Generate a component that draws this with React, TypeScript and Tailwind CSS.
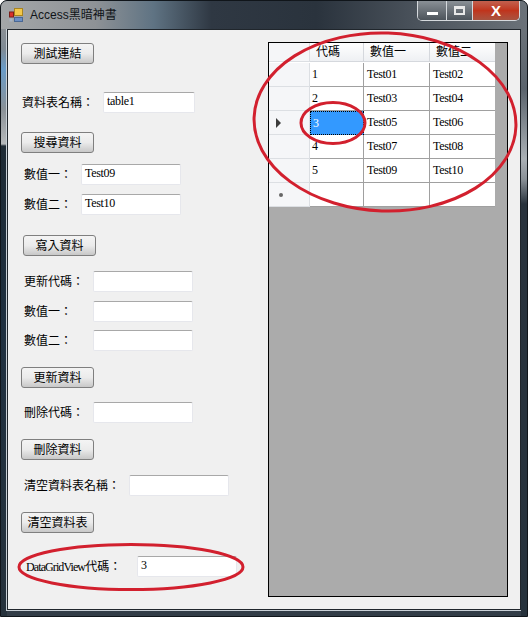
import type { ReactNode } from "react";

const fontFamily = "font-['Liberation_Serif','Noto_Sans_CJK_TC',serif]";

const Btn = ({ label, className = "" }: { label: string; className?: string }) => (
  <button
    className={`flex h-[21px] w-[73px] items-center justify-center rounded-[3px] border border-[#7f7f7f] bg-gradient-to-b from-[#f4f4f4] via-[#ebebeb] to-[#c8c8c8] text-[12px] leading-none text-black ${className}`}
  >
    {label}
  </button>
);

const Field = ({
  label,
  value = "",
  labelWidth,
  inputWidth = "w-[100px]",
  className = "",
}: {
  label: ReactNode;
  value?: string;
  labelWidth: string;
  inputWidth?: string;
  className?: string;
}) => (
  <div className={`flex h-[21px] items-center ${className}`}>
    <span className={`whitespace-nowrap text-[12px] leading-none text-black ${labelWidth}`}>{label}</span>
    <div
      className={`h-[21px] rounded-[2px] border border-[#e6e7ec] border-t-[#a8a8a8] bg-white pl-[3px] pt-[2px] text-[12px] leading-[13px] tracking-[-0.3px] text-black ${inputWidth}`}
    >
      {value}
    </div>
  </div>
);

const rows = [
  ["1", "Test01", "Test02"],
  ["2", "Test03", "Test04"],
  ["3", "Test05", "Test06"],
  ["4", "Test07", "Test08"],
  ["5", "Test09", "Test10"],
  ["", "", ""],
];

const headerCell = "h-[19px] border-b border-[#d5d8dd] bg-gradient-to-b from-white to-[#eef0f3] pl-[6px] text-[12px] leading-[18px]";

const Grid = () => (
  <div className="h-[555px] w-[240px] border border-black bg-[#ababab] text-black">
    <div className="flex h-[20px] w-[226px] bg-white">
      <div className="h-[19px] w-[41px] border-r border-b border-[#dcdfe3] bg-[#f5f6f8]" />
      <div className={`w-[54px] border-r ${headerCell}`}>代碼</div>
      <div className={`w-[66px] border-r ${headerCell}`}>數值一</div>
      <div className={`w-[65px] ${headerCell}`}>數值二</div>
    </div>
    {rows.map((row, i) => (
      <div key={i} className="flex h-[24px] w-[226px] bg-white text-[12px] leading-[23px] tracking-[-0.3px]">
        <div className="flex w-[41px] items-center border-r border-b border-[#dcdfe3] bg-[#f5f6f8] pl-[7px]">
          {i === 2 && <div className="h-0 w-0 border-y-[5px] border-l-[5px] border-y-transparent border-l-[#3c3c3c]" />}
          {i === 5 && <div className="ml-[3px] h-[4px] w-[4px] rounded-full bg-[#666666]" />}
        </div>
        <div
          className={`w-[54px] pl-[2px] ${
            i === 2
              ? "border border-dotted border-black bg-[#3399ff] text-white"
              : "border-r border-b border-[#a0a0a0]"
          }`}
        >
          {row[0]}
        </div>
        <div className="w-[66px] border-r border-b border-[#a0a0a0] pl-[3px]">{row[1]}</div>
        <div className="w-[65px] border-b border-[#a0a0a0] pl-[3px]">{row[2]}</div>
      </div>
    ))}
  </div>
);

const TitleBar = () => (
  <div className="relative flex h-[28px] items-center bg-[linear-gradient(90deg,#a4a7a9_0%,#8e9296_18%,#5f7383_29%,#2f3843_40%,#2a333d_60%,#49515a_78%,#6b7279_100%)] pl-[8px]">
    <svg width="14" height="14" viewBox="0 0 14 14" className="relative">
      <rect x="0.5" y="4" width="4" height="5" fill="#d8322a" stroke="#7a1f1a" />
      <rect x="5.5" y="0.5" width="8" height="7" fill="#f3c84a" stroke="#a88420" />
      <rect x="0.5" y="10.5" width="3" height="3" fill="#a8b4c4" />
      <rect x="5.5" y="9.5" width="8" height="4" fill="#6c8fc4" stroke="#4a6894" />
    </svg>
    <span className="relative ml-[7px] text-[12px] leading-none text-[#101418] font-['Liberation_Sans','Noto_Sans_CJK_TC',sans-serif]">
      Access黑暗神書
    </span>
    <div className="relative ml-auto mr-[7px] flex h-[20px] self-start overflow-hidden rounded-b-[5px] border border-t-0 border-[#d5d9dd]">
      <div className="flex w-[29px] items-end justify-center border-r border-[#d5d9dd] bg-gradient-to-b from-[#8a9096] to-[#4d545b] pb-[5px]">
        <div className="h-[3px] w-[11px] bg-white" />
      </div>
      <div className="flex w-[26px] items-center justify-center border-r border-[#d5d9dd] bg-gradient-to-b from-[#8a9096] to-[#4d545b]">
        <div className="h-[9px] w-[11px] border-2 border-t-[3px] border-[#e8e8e8]" />
      </div>
      <div className="flex w-[46px] items-center justify-center bg-gradient-to-b from-[#c2604e] via-[#c0341c] to-[#a8523f] text-[15px] font-bold leading-none text-white font-['Liberation_Sans',sans-serif]">
        X
      </div>
    </div>
  </div>
);

export default function App() {
  return (
    <div className={`relative h-[617px] w-[528px] overflow-hidden bg-white ${fontFamily}`}>
      <div className="h-[617px] w-[528px] overflow-hidden rounded-t-[7px] border border-[#10151a] bg-[#333d47]">
        <TitleBar />
        <div className="flex h-[587px]">
          <div className="h-full w-[6px] bg-[linear-gradient(180deg,#8b9095_0px,#7f8a94_20px,#6a9cc8_40px,#8a9197_80px,#b5b8ba_115px,#1f2b35_117px,#1f3040_300px,#26323c_100%)]" />
          <div className="h-[581px] w-[514px] border border-[#20262c] shadow-[0_0_0_1px_#c9d0d6]">
            <div className="flex h-full bg-[#f0f0f0] pl-[13px] pt-[12px]">
              <div className="flex w-[247px] shrink-0 flex-col">
                <Btn className="mt-[1px]" label="測試連結" />
                <Field className="mt-[28px] ml-[1px]" label="資料表名稱：" labelWidth="w-[81px]" inputWidth="w-[92px]" value="table1" />
                <Btn className="mt-[19px]" label="搜尋資料" />
                <Field className="mt-[11px] ml-[3px]" label="數值一：" labelWidth="w-[57px]" value="Test09" />
                <Field className="mt-[9px] ml-[3px]" label="數值二：" labelWidth="w-[57px]" value="Test10" />
                <Btn className="mt-[20px] ml-[2px]" label="寫入資料" />
                <Field className="mt-[15px] ml-[3px]" label="更新代碼：" labelWidth="w-[69px]" />
                <Field className="mt-[9px] ml-[3px]" label="數值一：" labelWidth="w-[69px]" />
                <Field className="mt-[8px] ml-[3px]" label="數值二：" labelWidth="w-[69px]" />
                <Btn className="mt-[16px]" label="更新資料" />
                <Field className="mt-[14px] ml-[3px]" label="刪除代碼：" labelWidth="w-[69px]" />
                <Btn className="mt-[16px]" label="刪除資料" />
                <Field className="mt-[15px] ml-[3px]" label="清空資料表名稱：" labelWidth="w-[105px]" />
                <Btn className="mt-[16px]" label="清空資料表" />
                <Field
                  className="mt-[23px] ml-[5px]"
                  label={
                    <>
                      <span className="tracking-[-0.9px]">DataGridView</span>代碼：
                    </>
                  }
                  labelWidth="w-[111px]"
                  value="3"
                />
              </div>
              <Grid />
            </div>
          </div>
          <div className="h-full w-[6px] bg-[linear-gradient(180deg,#6b7279_0px,#5a636c_60px,#aab0b5_130px,#8b9298_150px,#28323c_175px,#26323c_100%)]" />
        </div>
      </div>
      <svg width="528" height="617" className="pointer-events-none absolute left-0 top-0" fill="none" stroke="#d2202e" strokeWidth="3">
        <ellipse cx="385" cy="122" rx="131" ry="89" transform="rotate(2 385 122)" />
        <ellipse cx="333" cy="123" rx="32" ry="20.5" />
        <ellipse cx="131" cy="567" rx="112" ry="22.5" />
      </svg>
    </div>
  );
}
